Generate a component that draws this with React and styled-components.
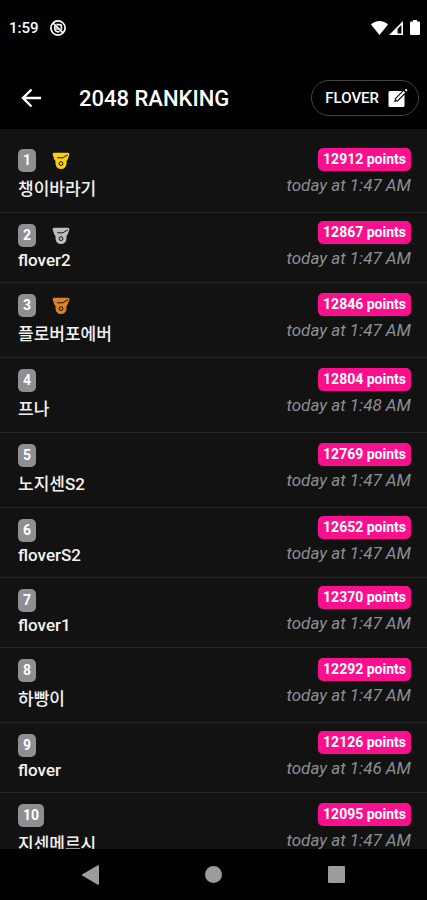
import styled, { createGlobalStyle } from 'styled-components';

const GlobalStyle = createGlobalStyle`
	* {
		box-sizing: border-box;
	}
	body {
		margin: 0;
		background: #000;
		color: #fff;
		font-family: Roboto, 'Noto Sans CJK KR', sans-serif;
	}
`;

const Screen = styled.div`
	display: flex;
	flex-direction: column;
	height: 100vh;
`;

const StatusBar = styled.div`
	display: flex;
	align-items: center;
	justify-content: space-between;
	flex: none;
	height: 67px;
	padding: 0 7px 12px 9px;
	font-size: 15px;
	font-weight: 500;
`;

const StatusGroup = styled.div`
	display: flex;
	align-items: center;
	gap: ${({ $gap }) => $gap}px;
`;

const Header = styled.header`
	display: flex;
	align-items: center;
	flex: none;
	height: 62px;
	padding: 0 8px 0 20px;
`;

const BackButton = styled.button`
	display: flex;
	padding: 0;
	border: 0;
	background: none;
	color: inherit;
`;

const Title = styled.h1`
	flex: 1;
	margin: 0 0 0 36px;
	font-size: 22px;
	font-weight: 500;
`;

const NameButton = styled.button`
	display: flex;
	align-items: center;
	gap: 9px;
	height: 36px;
	padding: 0 10px 0 13px;
	border: 1px solid #444;
	border-radius: 18px;
	background: none;
	color: inherit;
	font-family: inherit;
	font-size: 15px;
	font-weight: 500;
`;

const List = styled.ol`
	flex: 1;
	min-height: 0;
	margin: 0;
	padding: 9px 0 0;
	overflow-y: auto;
	background: #121212;
	list-style: none;
	scrollbar-width: none;
`;

const Row = styled.li`
	display: flex;
	align-items: center;
	justify-content: space-between;
	padding: 0 16px 0 18px;
	border-bottom: 1px solid #262626;
`;

const Player = styled.div`
	padding: 11px 0 12px;
`;

const RankLine = styled.div`
	display: flex;
	align-items: center;
	gap: 16px;
`;

const Badge = styled.span`
	display: block;
	padding: 0 5px;
	border-radius: 5px;
	background: ${({ $color }) => $color};
	color: #fff;
	font-size: 14px;
	font-weight: 700;
	line-height: 23px;
`;

const Name = styled.div`
	margin-top: 3px;
	color: #f2f2f2;
	font-size: 17px;
	font-weight: 500;
`;

const Score = styled.div`
	display: flex;
	flex-direction: column;
	align-items: flex-end;
	gap: 2px;
	padding-bottom: 5px;
`;

const When = styled.time`
	color: #8e8e93;
	font-size: 17px;
	font-style: italic;
	line-height: 24px;
`;

const NavBar = styled.nav`
	display: flex;
	flex: none;
	height: 51px;
	padding: 0 29px;
`;

const NavButton = styled.button`
	display: flex;
	flex: 1;
	align-items: center;
	justify-content: center;
	padding: 0;
	border: 0;
	background: none;
	color: #9c9c9c;
`;

const medals = ['#f7d014', '#bdbdbd', '#d9822b'];

const players = [
	{ name: '챙이바라기', points: 12912, time: '1:47 AM' },
	{ name: 'flover2', points: 12867, time: '1:47 AM' },
	{ name: '플로버포에버', points: 12846, time: '1:47 AM' },
	{ name: '프나', points: 12804, time: '1:48 AM' },
	{ name: '노지센S2', points: 12769, time: '1:47 AM' },
	{ name: 'floverS2', points: 12652, time: '1:47 AM' },
	{ name: 'flover1', points: 12370, time: '1:47 AM' },
	{ name: '하빵이', points: 12292, time: '1:47 AM' },
	{ name: 'flover', points: 12126, time: '1:46 AM' },
	{ name: '지센메르시', points: 12095, time: '1:47 AM' },
];

const NotificationIcon = () => (
	<svg width="16" height="16" viewBox="0 0 16 16" fill="none" stroke="currentColor">
		<circle cx="8" cy="8" r="7.1" strokeWidth="1.7" />
		<path d="M4.8 6v2.6a3.4 3.4 0 0 0 4.8 3M6.4 4.7h3.4a1.6 1.6 0 0 1 1.6 1.6v3.4" strokeWidth="1.7" />
		<path d="M3.4 3.4l9.2 9.2" strokeWidth="1.6" />
		<circle cx="7.4" cy="8.6" r="1" strokeWidth="1" />
	</svg>
);

const WifiIcon = () => (
	<svg width="17" height="14" viewBox="0 0 17 14" fill="currentColor">
		<path d="M8.5 14L0 3.6C2.3 1.2 5.2 0 8.5 0s6.2 1.2 8.5 3.6z" />
	</svg>
);

const SignalIcon = () => (
	<svg width="14" height="14" viewBox="0 0 14 14">
		<path d="M14 0v14H0zM12.4 4L8.6 7.8v4.6h3.8z" fill="currentColor" fillRule="evenodd" />
	</svg>
);

const BatteryIcon = () => (
	<svg width="10" height="15" viewBox="0 0 10 15" fill="currentColor">
		<path d="M3 0h4v1.5h2a1 1 0 0 1 1 1V14a1 1 0 0 1-1 1H1a1 1 0 0 1-1-1V2.5a1 1 0 0 1 1-1h2z" />
	</svg>
);

const BackIcon = () => (
	<svg width="23" height="20" viewBox="0 0 23 20" fill="none" stroke="currentColor" strokeWidth="2.4">
		<path d="M21 10H3M11.5 1.5L3 10l8.5 8.5" />
	</svg>
);

const EditIcon = () => (
	<svg width="20" height="20" viewBox="0 0 20 20">
		<rect x="0.5" y="3" width="16" height="16" rx="1.5" fill="currentColor" />
		<path d="M8 12.2L18 2.2" stroke="#000" strokeWidth="4.2" />
		<path d="M6.2 14l.8-3 2.200 2.200z" fill="#000" />
		<path d="M8.4 11.8L16.4 3.800M17.500 2.700l1.300-1.300" stroke="currentColor" strokeWidth="2" />
	</svg>
);

const MedalIcon = ({ color }) => (
	<svg width="18" height="18" viewBox="0 0 18 18">
		<path
			d="M2 .8h14q1.800.2 1.400 1.700L15.800 7.200l-1.300 1.800v2.600a5.500 5.500 0 0 1-11 0V9L2.200 7.200.6 2.500Q.2 1 2 .8z"
			fill={color}
		/>
		<path d="M5.200 5.800h5.600l5-3" fill="none" stroke="#121212" strokeWidth="1" />
		<circle cx="9" cy="11.600" r="1.900" fill="none" stroke="#121212" strokeWidth="1" />
	</svg>
);

const PlayerRow = ({ rank, name, points, time }) => (
	<Row>
		<Player>
			<RankLine>
				<Badge $color="#8e8e93">{rank}</Badge>
				{medals[rank - 1] && <MedalIcon color={medals[rank - 1]} />}
			</RankLine>
			<Name>{name}</Name>
		</Player>
		<Score>
			<Badge $color="#fb0f8d">{points} points</Badge>
			<When>today at {time}</When>
		</Score>
	</Row>
);

export default function App() {
	return (
		<Screen>
			<GlobalStyle />
			<StatusBar>
				<StatusGroup $gap={11}>
					1:59
					<NotificationIcon />
				</StatusGroup>
				<StatusGroup $gap={7}>
					<StatusGroup $gap={1}>
						<WifiIcon />
						<SignalIcon />
					</StatusGroup>
					<BatteryIcon />
				</StatusGroup>
			</StatusBar>
			<Header>
				<BackButton aria-label="Back">
					<BackIcon />
				</BackButton>
				<Title>2048 RANKING</Title>
				<NameButton>
					FLOVER
					<EditIcon />
				</NameButton>
			</Header>
			<List>
				{players.map((player, i) => (
					<PlayerRow key={player.name} rank={i + 1} {...player} />
				))}
			</List>
			<NavBar>
				<NavButton aria-label="Back">
					<svg width="17" height="20" viewBox="0 0 17 20" fill="currentColor">
						<path d="M17 1v18a.8.8 0 0 1-1.2.7L.5 10.7a.8.8 0 0 1 0-1.4L15.8.3A.8.8 0 0 1 17 1z" />
					</svg>
				</NavButton>
				<NavButton aria-label="Home">
					<svg width="17" height="17" viewBox="0 0 17 17" fill="currentColor">
						<circle cx="8.5" cy="8.5" r="8.5" />
					</svg>
				</NavButton>
				<NavButton aria-label="Recent apps">
					<svg width="17" height="17" viewBox="0 0 17 17" fill="currentColor">
						<rect width="17" height="17" rx="1" />
					</svg>
				</NavButton>
			</NavBar>
		</Screen>
	);
}
